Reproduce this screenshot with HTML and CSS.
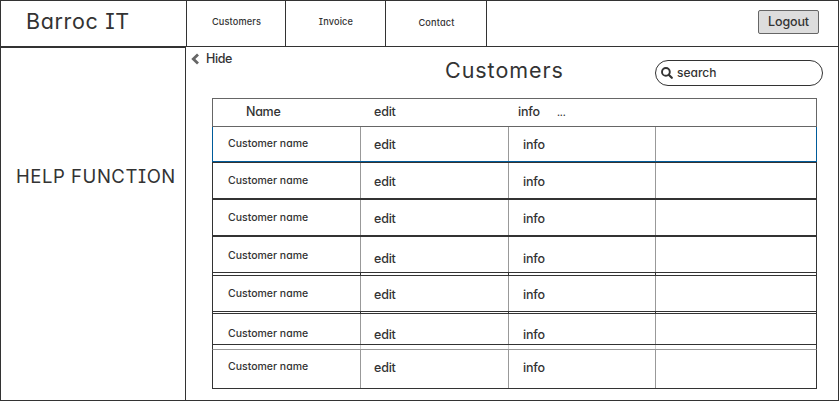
FILE: index.html
```html
<!DOCTYPE html>
<html lang="en">
<head>
<meta charset="utf-8">
<title>Barroc IT - Customers</title>
<link rel="stylesheet" href="styles.css">
</head>
<body>
<div class="app">
  <header class="topbar">
    <div class="brand"><span>Barroc IT</span></div>
    <nav class="nav">
      <a class="nav-item"><span>Customers</span></a>
      <a class="nav-item"><span>Invoice</span></a>
      <a class="nav-item nav-low"><span>Contact</span></a>
    </nav>
    <button class="logout"><span>Logout</span></button>
  </header>
  <div class="body">
    <aside class="sidebar"><span class="help">HELP FUNCTION</span></aside>
    <main class="main">
      <div class="toolbar">
        <a class="hide"><svg class="chevron" width="9" height="12" viewBox="0 0 9 12"><path d="M7 1.4 2.3 6 7 10.6" fill="none" stroke="#666" stroke-width="2.8"/></svg><span>Hide</span></a>
        <h1 class="title"><span>Customers</span></h1>
        <div class="search"><svg width="12" height="12" viewBox="0 0 12 12"><circle cx="4.9" cy="4.9" r="3.9" fill="none" stroke="#333" stroke-width="1.9"/><path d="M7.7 7.7l3.1 3.1" stroke="#333" stroke-width="2.2" stroke-linecap="round"/></svg><span>search</span></div>
      </div>
      <div class="table">
        <div class="head"><span class="h-name">Name</span><span class="h-edit">edit</span><span class="h-info">info</span><span class="h-more">...</span></div>
        <div class="row r1"><div class="name">Customer name</div><div class="edit">edit</div><div class="info">info</div><div></div></div>
        <div class="row r2"><div class="name">Customer name</div><div class="edit">edit</div><div class="info">info</div><div></div></div>
        <div class="row r3"><div class="name">Customer name</div><div class="edit">edit</div><div class="info">info</div><div></div></div>
        <div class="row r4"><div class="name">Customer name</div><div class="edit">edit</div><div class="info">info</div><div></div></div>
        <div class="seam seam-2"><div></div><div></div><div></div><div></div></div>
        <div class="row r5"><div class="name">Customer name</div><div class="edit">edit</div><div class="info">info</div><div></div></div>
        <div class="seam seam-1"><div></div><div></div><div></div><div></div></div>
        <div class="row r6"><div class="name">Customer name</div><div class="edit">edit</div><div class="info">info</div><div></div></div>
        <div class="seam seam-4"><div></div><div></div><div></div><div></div></div>
        <div class="row r7"><div class="name">Customer name</div><div class="edit">edit</div><div class="info">info</div><div></div></div>
      </div>
    </main>
  </div>
</div>
</body>
</html>
```
FILE: styles.css
```css
* { box-sizing: border-box; }
body {
  margin: 0;
  background: #fff;
  color: #333;
  font-family: Inter, "Liberation Sans", sans-serif;
  font-feature-settings: "cv11", "cv08";
  font-size: 12px;
  font-weight: 500;
}
.app {
  width: 839px;
  height: 401px;
  border: 1px solid #333;
  display: flex;
  flex-direction: column;
}
.topbar {
  height: 46px;
  border-bottom: 1px solid #333;
  display: flex;
}
.brand {
  width: 185px;
  padding: 7px 0 0 25px;
  font-size: 21.5px;
  font-weight: 400;
  line-height: 26px;
  letter-spacing: 0.65px;
  white-space: nowrap;
}
.nav { display: flex; border-left: 1px solid #333; }
.nav-item {
  width: 100px;
  padding: 14px 0 0 1px;
  border-right: 1px solid #333;
  text-align: center;
  font-size: 9.2px;
  line-height: 14px;
  letter-spacing: 0.15px;
}
.nav-item:first-child { width: 99px; }
.nav-low { width: 101px; padding-top: 15px; }
.logout {
  width: 61px;
  height: 24px;
  margin: 9px 19px 0 auto;
  padding: 0;
  border: 1px solid #666;
  border-radius: 2px;
  background: #ddd;
  color: #333;
  font: inherit;
  font-feature-settings: inherit;
  font-size: 12.5px;
  line-height: 20px;
  letter-spacing: -0.15px;
}
.body { flex: 1; display: flex; min-height: 0; }
.sidebar {
  width: 185px;
  border-top: 1px solid #333;
  border-right: 1px solid #333;
  padding: 116px 0 0 15px;
  white-space: nowrap;
}
.help { font-size: 18.5px; font-weight: 400; line-height: 24px; letter-spacing: 0.55px; }
.main { flex: 1; }
.toolbar { height: 51px; display: flex; align-items: flex-start; }
.hide {
  width: 259px;
  padding: 5px 0 0 5px;
  display: flex;
  align-items: center;
  font-size: 12.5px;
  line-height: 14px;
  letter-spacing: -0.4px;
}
.chevron { margin-right: 6px; }
.title {
  width: 210px;
  margin: 9px 0 0;
  font-size: 21.5px;
  line-height: 28px;
  font-weight: 400;
  letter-spacing: 0.95px;
}
.search {
  width: 168px;
  height: 26px;
  margin-top: 13px;
  padding: 0 0 1px 5px;
  border: 1px solid #333;
  border-radius: 13px;
  display: flex;
  align-items: center;
  gap: 4px;
}
.table { width: 605px; margin-left: 26px; font-size: 12.5px; line-height: 16px; letter-spacing: -0.2px; }
.head { height: 29px; border: 1px solid #666; display: flex; padding-top: 5px; }
.h-name { width: 128px; margin-left: 33px; letter-spacing: -0.3px; }
.h-edit { width: 144px; }
.h-info { width: 39px; }
.h-more { font-size: 10px; line-height: 17px; }
.row, .seam {
  display: grid;
  grid-template-columns: 148px 148px 147px 1fr;
  border: 0 solid #333;
  border-width: 1px;
}
.row > div, .seam > div { border-right: 1px solid #999; }
.row > div:last-child, .seam > div:last-child { border-right: 0; }
.name { padding: 10px 0 0 15px; font-size: 10.5px; letter-spacing: 0; }
.edit { padding: 11px 0 0 13px; }
.info { padding: 11px 0 0 14px; }
.r1 { height: 35px; border-color: #005b9a; border-top: 0; }
.r1 .name { padding-top: 9px; }
.r1 .edit, .r1 .info { padding-top: 10px; }
.r2, .r3, .r4, .r5 { height: 37px; }
.r4 .name { padding-top: 11px; }
.r4 .edit, .r4 .info { padding-top: 14px; }
.r6 { height: 32px; }
.r6 .name { padding-top: 12px; }
.r6 .edit, .r6 .info { padding-top: 13px; }
.r7 { height: 40px; border-top-color: #999; }
.r7 .name { padding-top: 9px; }
.r7 .edit, .r7 .info { padding-top: 10px; }
.seam { border-width: 0 1px; }
.seam-2 { height: 2px; }
.seam-1 { height: 1px; }
.seam-2 > div, .seam-1 > div { border-color: #333; }
.seam-4 { height: 4px; }
.seam-4 > div { border-color: #ccc; }
```
